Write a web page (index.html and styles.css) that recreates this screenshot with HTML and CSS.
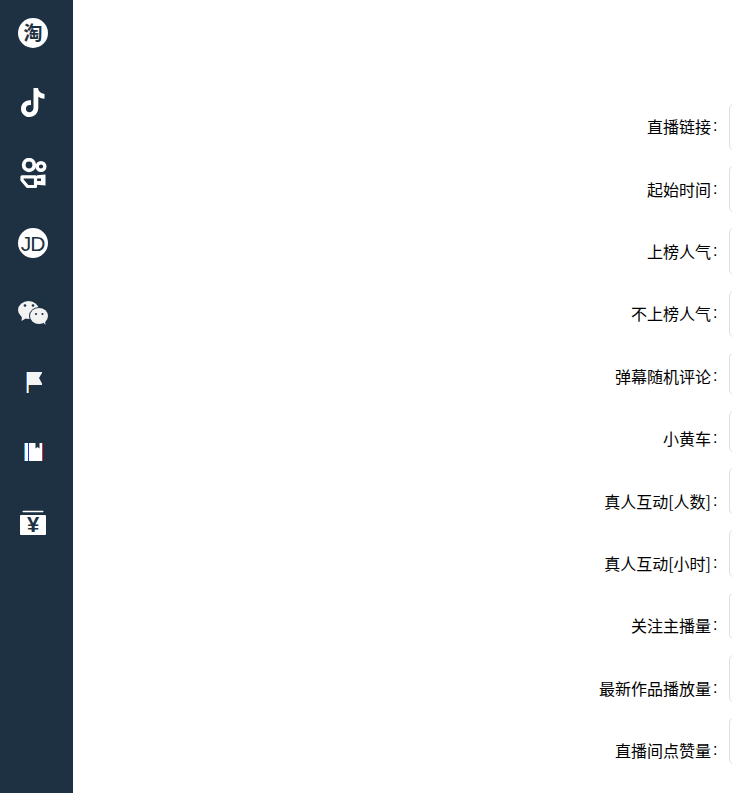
FILE: index.html
```html
<!DOCTYPE html>
<html lang="zh-CN">
<head>
<meta charset="utf-8">
<title>设置</title>
<link rel="stylesheet" href="styles.css">
</head>
<body>
<div class="layout">
  <nav class="side">
    <a class="nav-item"><svg class="ico" viewBox="0 0 30 30"><circle cx="15" cy="15" r="15" fill="#fff"/><text x="15" y="21.500" class="ico-text" text-anchor="middle">淘</text></svg></a>
    <a class="nav-item"><svg class="ico" viewBox="0 0 30 30"><path fill="#fff" d="M15.500 0h4.500c.3 3.300 2.500 5.500 6.500 6v4.700c-2.300 0-4.500-.7-6.200-1.900v10.700c0 5.700-4 9.500-8.800 9.500-5 0-8.500-3.800-8.500-8.300 0-5.200 4.500-9.200 10-8.400v5c-2.800-.8-5.100 1-5.100 3.400 0 2 1.500 3.500 3.400 3.500 2.300 0 4.200-1.500 4.200-4.200z"/></svg></a>
    <a class="nav-item"><svg class="ico" viewBox="0 0 30 30"><g fill="none" stroke="#fff"><circle cx="11" cy="7" r="5.300" stroke-width="3.800"/><circle cx="23" cy="8.500" r="3.800" stroke-width="3.400"/></g><path fill="none" stroke="#fff" stroke-width="3.200" stroke-linejoin="round" d="M4 18.800h13.500v9.700H9.500L4 22z"/><path fill="#fff" d="M19 17.200l8.500-.7v11l-8.500-.8v-3.700h4v-2.500h-4z"/></svg></a>
    <a class="nav-item"><svg class="ico" viewBox="0 0 30 30"><circle cx="15" cy="15" r="15" fill="#fff"/><text x="14.500" y="22.500" class="ico-jd" text-anchor="middle">JD</text></svg></a>
    <a class="nav-item"><svg class="ico" viewBox="0 0 30 30"><ellipse cx="10.500" cy="12" rx="10.500" ry="9" fill="#f2f2f2"/><path fill="#f2f2f2" d="M4 18l-.5 5 5-3z"/><ellipse cx="21" cy="18" rx="10" ry="9" fill="#1d3142"/><ellipse cx="21" cy="18" rx="9" ry="8" fill="#f2f2f2"/><path fill="#f2f2f2" d="M25 24l2.500 3-.5-4.500z"/><g fill="#1d3142"><circle cx="7" cy="7.500" r="1.300"/><circle cx="15" cy="7.500" r="1.300"/><circle cx="18" cy="16" r="1.100"/><circle cx="24.500" cy="16" r="1.100"/></g></svg></a>
    <a class="nav-item"><svg class="ico" viewBox="0 0 30 30"><rect x="8" y="4" width="1" height="21" fill="#2f7df6"/><rect x="9" y="4" width="1" height="21" fill="#fff"/><rect x="10" y="17" width="1" height="8" fill="#f2b632"/><path fill="#f4f4f4" d="M10 4h14v1l-3 5 3 5.500V17H10z"/></svg></a>
    <a class="nav-item"><svg class="ico" viewBox="0 0 30 30"><rect x="6" y="5" width="19" height="18" fill="#fff"/><rect x="6" y="5" width="1" height="18" fill="#19a7f5"/><rect x="10" y="5" width="1" height="18" fill="#2436d8"/><rect x="24" y="5" width="1" height="18" fill="#c9344a"/><path fill="#1d3142" d="M17.500 5h4v5.500l-2-1.500-2 1.500z"/></svg></a>
    <a class="nav-item"><svg class="ico" viewBox="0 0 30 30"><rect x="4.500" y="2.700" width="21" height="1.500" rx=".75" fill="#fff"/><rect x="2" y="7" width="26" height="20" rx="1" fill="#fff"/><text x="15" y="24" class="ico-yen" text-anchor="middle">¥</text></svg></a>
  </nav>
  <main class="content">
    <div class="labels">
      <label class="lbl">直播链接<span class="colon">:</span></label>
      <label class="lbl">起始时间<span class="colon">:</span></label>
      <label class="lbl">上榜人气<span class="colon">:</span></label>
      <label class="lbl">不上榜人气<span class="colon">:</span></label>
      <label class="lbl">弹幕随机评论<span class="colon">:</span></label>
      <label class="lbl">小黄车<span class="colon">:</span></label>
      <label class="lbl">真人互动[人数]<span class="colon">:</span></label>
      <label class="lbl">真人互动[小时]<span class="colon">:</span></label>
      <label class="lbl">关注主播量<span class="colon">:</span></label>
      <label class="lbl">最新作品播放量<span class="colon">:</span></label>
      <label class="lbl">直播间点赞量<span class="colon">:</span></label>
    </div>
    <div class="boxes">
      <div class="box"></div>
      <div class="box"></div>
      <div class="box"></div>
      <div class="box"></div>
      <div class="box box-short"></div>
      <div class="box box-short"></div>
      <div class="box"></div>
      <div class="box"></div>
      <div class="box"></div>
      <div class="box"></div>
      <div class="box"></div>
    </div>
  </main>
</div>
</body>
</html>
```
FILE: styles.css
```css
* { box-sizing: border-box; }
html, body { margin: 0; height: 100%; overflow: hidden; background: #fff; }
body { font-family: "Noto Sans CJK SC", "Liberation Sans", sans-serif; font-size: 16px; color: #000; }
.layout { display: flex; height: 793px; }
.side { width: 73px; flex: none; background: #1d3142; display: flex; flex-direction: column; padding: 18px 0 0 18px; gap: 40px; }
.nav-item { display: block; width: 30px; height: 30px; }
.ico { display: block; width: 30px; height: 30px; }
.ico-text { font-family: "Noto Sans CJK SC", sans-serif; font-size: 19px; font-weight: 700; fill: #1d3142; }
.ico-jd { font-family: "Liberation Sans", sans-serif; font-size: 21px; letter-spacing: -1px; fill: #1d3142; }
.ico-yen { font-family: "Liberation Sans", sans-serif; font-size: 22px; font-weight: 700; fill: #1d3142; }
.content { flex: 1; min-width: 0; display: flex; align-items: flex-start; padding-top: 102.600px; overflow: hidden; }
.labels { flex: none; width: 646px; margin-top: -0.500px; display: flex; flex-direction: column; }
.lbl { display: flex; justify-content: flex-end; align-items: center; height: 62.400px; padding-bottom: 14px; white-space: nowrap; }
.colon { margin-left: 2px; width: 6px; font-family: "Liberation Sans", sans-serif; }
.boxes { flex: none; width: 200px; margin-left: 10px; display: flex; flex-direction: column; gap: 14px; }
.box { height: 48.400px; border: 1px solid #dcdfe6; border-radius: 6px; background: #fff; }
.box-short { height: 43.400px; }
```
